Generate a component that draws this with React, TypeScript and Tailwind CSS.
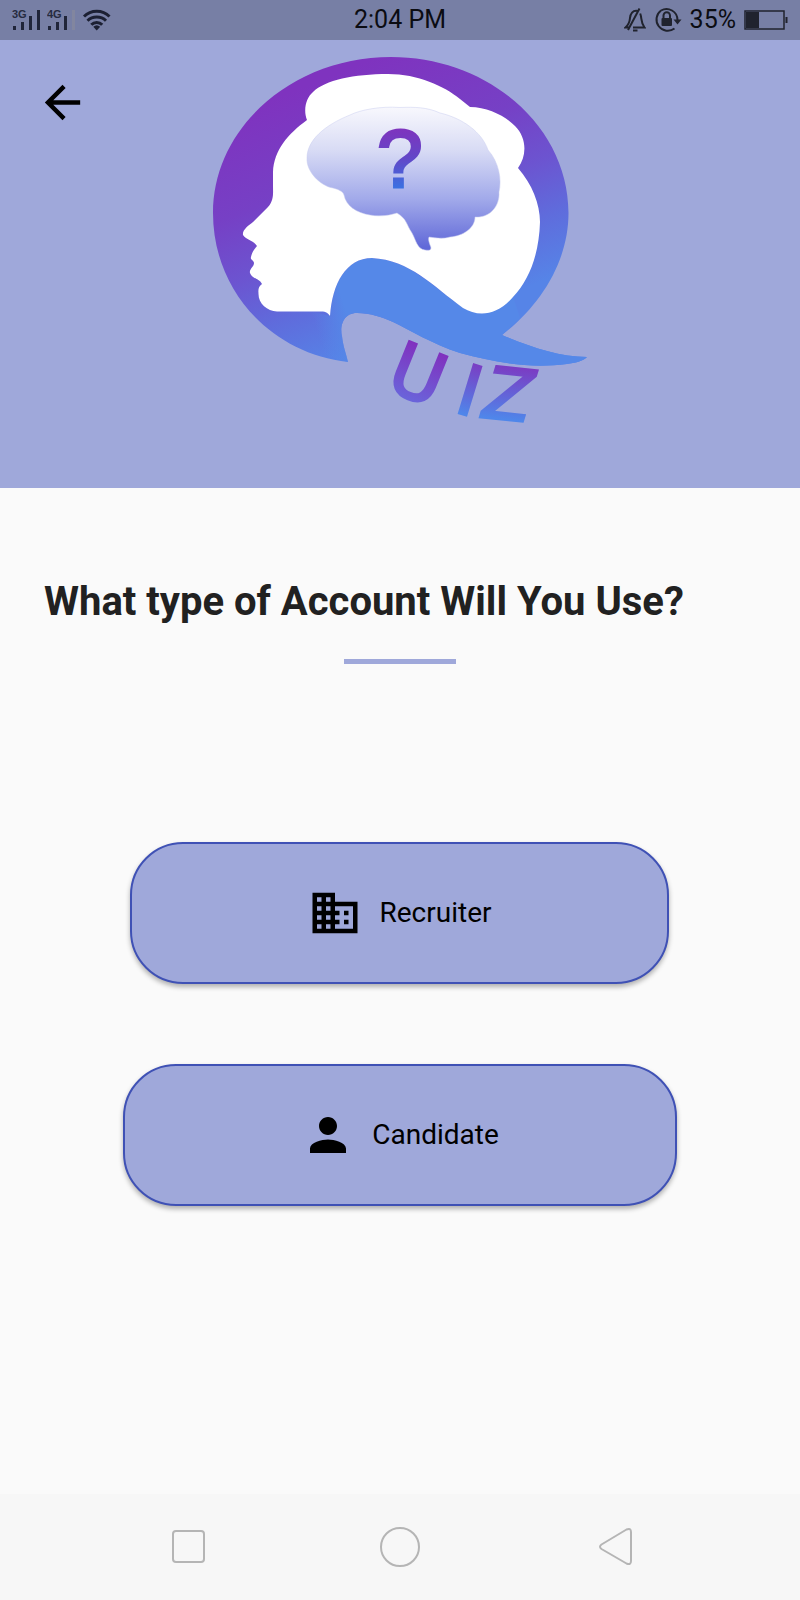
import type { ReactNode } from "react";
import { MdArrowBack, MdBusiness, MdPerson } from "react-icons/md";

function Signal({ label, missingLast }: { label: string; missingLast?: boolean }) {
  return (
    <svg width="35" height="24" viewBox="0 0 35 24" role="img" aria-label={label + " signal"}>
      <text x="0" y="10" fontSize="11" fontWeight="700" fontFamily="Liberation Sans, sans-serif" fill="#262b40">
        {label}
      </text>
      <g fill="#20253a">
        <rect x="1" y="18" width="3" height="4" />
        <rect x="9" y="14" width="3" height="8" />
        <rect x="17" y="8" width="3" height="14" />
        <rect x="25" y="2" width="3" height="20" fill={missingLast ? "#82869f" : "#20253a"} />
      </g>
    </svg>
  );
}

function Wifi() {
  return (
    <svg width="29" height="22" viewBox="0 0 29 22" fill="none" stroke="#1c2033" strokeWidth="3" aria-hidden="true">
      <path d="M2 7.5C9 .6 20.5 .6 27.500 7.5" />
      <path d="M5.500 11.8C10.500 6.8 19 6.8 24 11.8" />
      <path d="M9.300 15.8C12.300 12.6 17.200 12.6 20.200 15.8" />
      <path d="M11.300 17.8Q14.700 14.8 18.200 17.8L14.700 21.500Z" fill="#1c2033" stroke="none" />
    </svg>
  );
}

function StatusBar() {
  return (
    <div className="grid h-10 grid-cols-[1fr_auto_1fr] items-center bg-[#777fa5] px-3 font-['Roboto',sans-serif] text-[25px] leading-10 text-[#0b0c12]">
      <div className="flex items-center">
        <Signal label="3G" />
        <Signal label="4G" missingLast />
        <Wifi />
      </div>
      <span>2:04 PM</span>
      <div className="flex items-center justify-end">
        <svg width="22" height="26" viewBox="0 0 22 26" fill="none" stroke="#20232e" strokeWidth="2" aria-hidden="true">
          <path d="M14 4C8.5 2.8 6.3 7 6 11C5.7 15 4.6 17.6 1.5 20.5H5M16.2 6.5C18 11 16.5 15.500 20.5 20.500H9" />
          <path d="M15.500 1.500L4 23" />
          <path d="M9 23.500H13.500" />
        </svg>
        <svg className="ml-2" width="28" height="26" viewBox="0 0 28 26" fill="none" stroke="#20232e" strokeWidth="2" aria-hidden="true">
          <path d="M7 3.500A11 11 0 1 0 20.500 21.500" />
          <path d="M7 3.500A11 11 0 0 1 23.500 13" />
          <path d="M19.500 12.500H27.500L23.500 17.500Z" fill="#20232e" stroke="none" />
          <rect x="7.500" y="11" width="10.500" height="8" rx="1" fill="#20232e" stroke="none" />
          <path d="M9.500 11V8.500A3.200 3.200 0 0 1 16 8.500V11" />
        </svg>
        <span className="ml-2">35%</span>
        <svg className="ml-2" width="44" height="22" viewBox="0 0 44 22" aria-hidden="true">
          <rect x="1" y="2" width="39" height="18" fill="none" stroke="#20232e" strokeWidth="1.500" />
          <rect x="2" y="3" width="13" height="16" fill="#20232e" />
          <rect x="41.500" y="8" width="2" height="6" fill="#20232e" />
        </svg>
      </div>
    </div>
  );
}

function QuizLogo() {
  return (
    <svg viewBox="200 50 400 380" className="w-full overflow-visible" role="img" aria-label="Quiz">
      <defs>
        <linearGradient id="ring" gradientUnits="userSpaceOnUse" x1="320" y1="80" x2="420" y2="330">
          <stop offset="0" stopColor="#7f33bf" />
          <stop offset=".35" stopColor="#7640c5" />
          <stop offset=".58" stopColor="#6c54d0" />
          <stop offset=".78" stopColor="#5f6cdc" />
          <stop offset="1" stopColor="#5684e7" />
        </linearGradient>
        <linearGradient id="swoosh" gradientUnits="userSpaceOnUse" x1="320" y1="340" x2="352" y2="330">
          <stop offset="0" stopColor="#5588e8" stopOpacity="0" />
          <stop offset="1" stopColor="#5588e8" />
        </linearGradient>
        <linearGradient id="brain" gradientUnits="userSpaceOnUse" x1="0" y1="107" x2="0" y2="248">
          <stop offset="0" stopColor="#f8f8fd" />
          <stop offset=".3" stopColor="#d9dcf5" />
          <stop offset=".65" stopColor="#a2aaea" />
          <stop offset="1" stopColor="#6068d8" />
        </linearGradient>
        <linearGradient id="mark" gradientUnits="userSpaceOnUse" x1="0" y1="127" x2="0" y2="189">
          <stop offset="0" stopColor="#8033bd" />
          <stop offset=".5" stopColor="#6247c8" />
          <stop offset="1" stopColor="#3a72e2" />
        </linearGradient>
        <linearGradient id="letterU" gradientUnits="userSpaceOnUse" x1="0" y1="-53" x2="0" y2="2">
          <stop offset="0" stopColor="#8031bf" />
          <stop offset="1" stopColor="#6a64da" />
        </linearGradient>
        <linearGradient id="letterIZ" gradientUnits="userSpaceOnUse" x1="0" y1="-53" x2="0" y2="0">
          <stop offset="0" stopColor="#7b3cc3" />
          <stop offset="1" stopColor="#4f86ea" />
        </linearGradient>
      </defs>
      <path
        fill="url(#ring)"
        d="M348 362C270 353 213 290 213 213C213 127 293 57 391 57C489 57 568.500 127 568.500 213C568.500 262 540 306 502 335C530 347 560 357 587 357C583 361 575 363 567 364C528 369 495 362 460 353C432 344 410 330 393 322C382 317 370 313 357 313C342 313 340 328 342 336C343 346 346 353 348 362Z"
      />
      <path
        fill="url(#swoosh)"
        d="M312 312L330 316C332 284 346 258 372 258C410 260 430 285 463 308C480 318 497 315 513 297L520 318L502 335C530 347 560 357 587 357C583 361 575 363 567 364C528 369 495 362 460 353C432 344 410 330 393 322C382 317 370 313 357 313C342 313 340 328 342 336C343 346 346 353 348 362L312 351Z"
      />
      <path
        fill="#fff"
        d="M330 316C328 313 326 311 319 311.500H277C267 311 258 304 258.500 293C258 289 259 286 262 284C259 278 252 279 250 273C249 269 254 267 254 263C254 260 250 260 251 257C252 252 254 250 257 246C253 240 246 240 243 235C242 230 249 225 253 222L268 207C274 200 273 194 273 186V172C274 150 288 134 307 120C303 110 306 98 313 92C325 80 354 74 388 74C418 74 444 86 460 99L470 107C488 107 505 116 515 126C527 138 527 156 518 168C532 184 540 204 540 222C539 255 529 280 513 297C497 316 478 317 463 308C433 286 410 260 372 258C346 258 332 284 330 316Z"
      />
      <path
        fill="url(#brain)"
        stroke="#c9cdf0"
        strokeOpacity=".5"
        d="M400 107.500C380 106 360 110 350 115C325 125 307 140 307 158C306 171 320 186 333 188C337 189 343 191 344 195C346 206 357 213 370 215C382 217 390 215 397 213C407 219 406 224 412 233C416 240 417 249 425 250C431 251 432 249 430 245C429 242 428 239 429 237C436 238 443 239 450 237C463 236 475 228 475 217C490 218 500 206 499 192C502 180 499 162 488 150C482 132 462 118 440 113C427 107 414 107 400 107.500Z"
      />
      <text
        x="377"
        y="187"
        fontSize="82"
        fontFamily="Liberation Sans, sans-serif"
        fill="url(#mark)"
        stroke="url(#mark)"
        strokeWidth="3"
      >
        ?
      </text>
      <g fontFamily="DejaVu Sans, sans-serif" strokeWidth="3">
        <text transform="translate(384 388) rotate(22)" fontSize="72" fill="url(#letterU)" stroke="url(#letterU)">
          U
        </text>
        <text transform="translate(453 411) rotate(17)" fontSize="69" fill="url(#letterIZ)" stroke="url(#letterIZ)">
          I
        </text>
        <text transform="translate(482 417) rotate(6)" fontSize="71" fontStyle="oblique" fill="url(#letterIZ)" stroke="url(#letterIZ)">
          Z
        </text>
      </g>
    </svg>
  );
}

function AccountButton({ icon, children }: { icon: ReactNode; children: ReactNode }) {
  return (
    <button
      type="button"
      className="flex h-[142px] items-center gap-[17px] rounded-[53px] border-2 border-[#3f51b5] bg-[#9fa8da] px-[176px] text-[28px] text-black shadow-[0_3px_5px_rgba(0,0,0,0.3)]"
    >
      {icon}
      <span>{children}</span>
    </button>
  );
}

function NavButton({ label, children }: { label: string; children: ReactNode }) {
  return (
    <button type="button" aria-label={label} className="flex flex-1 justify-center">
      <svg width="48" height="48" viewBox="0 0 48 48" fill="none" stroke="#b5b5b5" strokeWidth="2" strokeLinejoin="round">
        {children}
      </svg>
    </button>
  );
}

export default function App() {
  return (
    <div className="flex min-h-screen flex-col bg-[#fafafa] font-['Roboto',sans-serif]">
      <StatusBar />
      <header className="grid grid-cols-[1fr_2fr_1fr] items-start bg-[#9fa8da] pt-[10px] pb-[58px]">
        <button type="button" aria-label="Back" className="mt-[26px] ml-[36px] w-fit text-black">
          <MdArrowBack size={53} />
        </button>
        <QuizLogo />
      </header>
      <main className="flex flex-1 flex-col items-center pt-[90px]">
        <h1 className="w-full px-[44px] text-[40px] leading-[48px] font-bold text-[#212121]">
          What type of Account Will You Use?
        </h1>
        <div className="mt-[33px] h-[5px] w-28 bg-[#9fa8da]" />
        <div className="mt-[178px] flex flex-col items-center gap-[80px]">
          <AccountButton icon={<MdBusiness size={54} />}>Recruiter</AccountButton>
          <AccountButton icon={<MdPerson size={54} />}>Candidate</AccountButton>
        </div>
      </main>
      <nav className="flex h-[106px] items-center bg-[#f7f7f7] px-[84px]">
        <NavButton label="Recent apps">
          <rect x="8" y="8" width="31" height="31" rx="3" />
        </NavButton>
        <NavButton label="Home">
          <circle cx="24" cy="24" r="19" />
        </NavButton>
        <NavButton label="Back">
          <path d="M14.500 21.500L39.500 6.500Q44 4.500 44 9V38Q44 42.500 39.500 40.500L14.500 26Q11.500 23.800 14.500 21.500Z" />
        </NavButton>
      </nav>
    </div>
  );
}
